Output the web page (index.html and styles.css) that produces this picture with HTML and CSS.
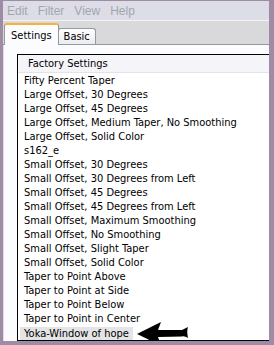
FILE: index.html
```html
<!DOCTYPE html>
<html lang="en">
<head>
    <meta charset="UTF-8">
    <meta name="viewport" content="width=device-width, initial-scale=1.0">
    <title>Settings</title>
    <link rel="stylesheet" href="styles.css">
</head>
<body>
    <div class="window">
        <!-- Menu bar -->
        <div class="menubar">
            <span>Edit</span>
            <span>Filter</span>
            <span>View</span>
            <span>Help</span>
        </div>

        <!-- Tabs -->
        <div class="tabstrip">
            <div class="tab active">Settings</div>
            <div class="tab">Basic</div>
        </div>

        <!-- Tab panel with the presets list -->
        <div class="panel">
            <div class="list">
                <div class="list-header">Factory Settings</div>
                <div class="items">
                    <div class="item">Fifty Percent Taper</div>
                    <div class="item">Large Offset, 30 Degrees</div>
                    <div class="item">Large Offset, 45 Degrees</div>
                    <div class="item">Large Offset, Medium Taper, No Smoothing</div>
                    <div class="item">Large Offset, Solid Color</div>
                    <div class="item">s162_e</div>
                    <div class="item">Small Offset, 30 Degrees</div>
                    <div class="item">Small Offset, 30 Degrees from Left</div>
                    <div class="item">Small Offset, 45 Degrees</div>
                    <div class="item">Small Offset, 45 Degrees from Left</div>
                    <div class="item">Small Offset, Maximum Smoothing</div>
                    <div class="item">Small Offset, No Smoothing</div>
                    <div class="item">Small Offset, Slight Taper</div>
                    <div class="item">Small Offset, Solid Color</div>
                    <div class="item">Taper to Point Above</div>
                    <div class="item">Taper to Point at Side</div>
                    <div class="item">Taper to Point Below</div>
                    <div class="item">Taper to Point in Center</div>
                    <div class="item selected">
                        <span class="sel-text">Yoka-Window of hope</span>
                        <!-- Pointer arrow drawn over the list -->
                        <svg class="arrow" width="52" height="24" viewBox="0 0 52 24">
                            <path d="M0 13 C6 10 14 6 24 1 C23 4 22 6 21 9 L45 9 C47 8 49 7 51 6 C50 9 50 12 51 17 C49 16 47 15 45 15.5 L21 16 C22 19 23 21 24 24 C14 20 6 16 0 13 Z" fill="#000"/>
                        </svg>
                    </div>
                </div>
            </div>
        </div>
    </div>
</body>
</html>
```

FILE: styles.css
```css
/* Page frame */
body {
    margin: 0;
    background-color: #9d8ca3;
    font-family: "DejaVu Sans Condensed", "Liberation Sans", Arial, sans-serif;
    font-size: 11px;
    color: #000;
}

.window {
    margin: 1px 5px 4px 3px;
    height: 340px;
    display: flex;
    flex-direction: column;
    background-color: #fcfcfe;
}

/* Menu bar */
.menubar {
    height: 19px;
    background-color: #dcdde6;
    border-bottom: 1px solid #f4f4f8;
    display: flex;
    align-items: center;
    gap: 10px;
    padding-left: 4px;
    font-family: "Liberation Sans", Arial, sans-serif;
    font-size: 12px;
    color: #a5a5ad;
}

/* Tab strip */
.tabstrip {
    height: 23px;
    background-color: #d9d9dc;
    border-bottom: 1px solid #919b9c;
    display: flex;
    align-items: flex-end;
    padding-left: 1px;
}

.tab {
    height: 15px;
    padding: 0 5px;
    line-height: 16px;
    border: 1px solid #919b9c;
    border-bottom: none;
    border-radius: 3px 3px 0 0;
    background: linear-gradient(#fefefe, #ececf0);
    margin-left: -1px;
}

.tab.active {
    height: 20px;
    line-height: 21px;
    padding: 0 6px;
    background: #fcfcfe;
    border-top: 2px solid #f5b33b;
    margin-bottom: -1px;
    margin-left: 0;
}

/* Panel */
.panel {
    flex: 1;
    padding: 9px 0 0 13px;
    border-left: 1px solid #dcdce2;
    display: flex;
    min-height: 0;
}

.list {
    flex: 1;
    border: 1px solid #000;
    border-right: none;
    background-color: #fff;
    overflow: hidden;
}

.list-header {
    height: 17px;
    line-height: 18px;
    padding-left: 10px;
    background-color: #f4f4f9;
    border-bottom: 1px solid #e2e2ea;
}

.items {
    padding: 1px 0 0 2px;
}

.item {
    height: 14px;
    line-height: 14px;
    padding-left: 4px;
    white-space: nowrap;
}

.item.selected {
    position: relative;
    padding-left: 0;
}

.sel-text {
    display: inline-block;
    height: 14px;
    padding: 0 4px;
    background-color: #e4e4e6;
    margin-top: 1px;
}

.arrow {
    position: absolute;
    left: 117px;
    top: -5px;
}
```
